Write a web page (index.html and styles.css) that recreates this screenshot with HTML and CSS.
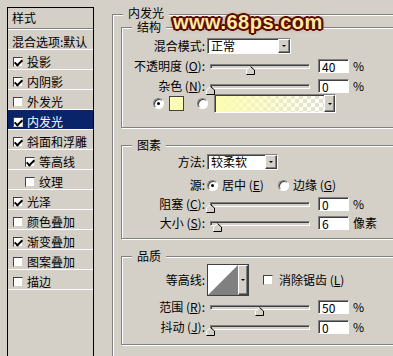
FILE: index.html
```html
<!DOCTYPE html>
<html lang="zh-CN">
<head>
  <meta charset="UTF-8">
  <title>图层样式 - 内发光</title>
  <meta name="viewport" content="width=device-width, initial-scale=1.0">
  <link rel="stylesheet" href="styles.css">
</head>
<body>

<div class="dialog">
  <div class="style-list">
    <div class="list-head">样式</div>
    <div class="list-row first">混合选项:默认</div>
    <div class="list-row"><span class="cb on"></span>投影</div>
    <div class="list-row"><span class="cb on"></span>内阴影</div>
    <div class="list-row"><span class="cb"></span>外发光</div>
    <div class="list-row selected"><span class="cb on"></span>内发光</div>
    <div class="list-row"><span class="cb on"></span>斜面和浮雕</div>
    <div class="list-row sub"><span class="cb on"></span>等高线</div>
    <div class="list-row sub"><span class="cb"></span>纹理</div>
    <div class="list-row"><span class="cb on"></span>光泽</div>
    <div class="list-row"><span class="cb"></span>颜色叠加</div>
    <div class="list-row"><span class="cb on"></span>渐变叠加</div>
    <div class="list-row"><span class="cb"></span>图案叠加</div>
    <div class="list-row"><span class="cb"></span>描边</div>
  </div>

  <div class="group outer">
    <span class="group-title top-title">内发光</span>

    <!-- 结构 -->
    <div class="group sec-structure">
      <span class="group-title">结构</span>
      <div class="row r-mode">
        <span class="lbl">混合模式:</span>
        <div class="select sel-mode"><span class="val">正常</span><span class="drop"></span></div>
      </div>
      <div class="row r-opacity">
        <span class="lbl">不透明度 (<u>O</u>):</span>
        <div class="slider"><div class="track"></div>
          <svg class="thumb" style="left:40px" width="9" height="9" viewBox="0 0 9 9"><path d="M0.5 8.5V4L4.5 0.5L8.5 4V8.5Z" fill="#d4d0c8"/><path d="M0.5 8V4L4.5 0.5" fill="none" stroke="#fff"/><path d="M4.5 0.5L8.5 4V8.5H0.5" fill="none" stroke="#000"/></svg>
        </div>
        <span class="num">40</span><span class="unit">%</span>
      </div>
      <div class="row r-noise">
        <span class="lbl">杂色 (<u>N</u>):</span>
        <div class="slider"><div class="track"></div>
          <svg class="thumb" style="left:0px" width="9" height="9" viewBox="0 0 9 9"><path d="M0.5 8.5V4L4.5 0.5L8.5 4V8.5Z" fill="#d4d0c8"/><path d="M0.5 8V4L4.5 0.5" fill="none" stroke="#fff"/><path d="M4.5 0.5L8.5 4V8.5H0.5" fill="none" stroke="#000"/></svg>
        </div>
        <span class="num">0</span><span class="unit">%</span>
      </div>
      <div class="row r-color">
        <span class="radio on"></span>
        <span class="swatch"></span>
        <span class="radio r-grad"></span>
        <div class="gradient"><span class="drop"></span></div>
      </div>
    </div>

    <!-- 图素 -->
    <div class="group sec-elements">
      <span class="group-title">图素</span>
      <div class="row r-method">
        <span class="lbl">方法:</span>
        <div class="select sel-method"><span class="val">较柔软</span><span class="drop"></span></div>
      </div>
      <div class="row r-source">
        <span class="lbl">源:</span>
        <span class="radio on src"></span><span class="opt w1">居中 (<u>E</u>)</span>
        <span class="radio src"></span><span class="opt">边缘 (<u>G</u>)</span>
      </div>
      <div class="row r-choke">
        <span class="lbl">阻塞 (<u>C</u>):</span>
        <div class="slider"><div class="track"></div>
          <svg class="thumb" style="left:0px" width="9" height="9" viewBox="0 0 9 9"><path d="M0.5 8.5V4L4.5 0.5L8.5 4V8.5Z" fill="#d4d0c8"/><path d="M0.5 8V4L4.5 0.5" fill="none" stroke="#fff"/><path d="M4.5 0.5L8.5 4V8.5H0.5" fill="none" stroke="#000"/></svg>
        </div>
        <span class="num">0</span><span class="unit">%</span>
      </div>
      <div class="row r-size">
        <span class="lbl">大小 (<u>S</u>):</span>
        <div class="slider"><div class="track"></div>
          <svg class="thumb" style="left:7px" width="9" height="9" viewBox="0 0 9 9"><path d="M0.5 8.5V4L4.5 0.5L8.5 4V8.5Z" fill="#d4d0c8"/><path d="M0.5 8V4L4.5 0.5" fill="none" stroke="#fff"/><path d="M4.5 0.5L8.5 4V8.5H0.5" fill="none" stroke="#000"/></svg>
        </div>
        <span class="num">6</span><span class="unit">像素</span>
      </div>
    </div>

    <!-- 品质 -->
    <div class="group sec-quality">
      <span class="group-title">品质</span>
      <div class="row r-contour">
        <span class="lbl">等高线:</span>
        <div class="contour">
          <svg width="30" height="30" viewBox="0 0 30 30"><rect width="30" height="30" fill="#fff"/><path d="M0 30L30 0V30Z" fill="#808080"/></svg>
          <span class="drop"></span>
        </div>
        <span class="cb"></span><span class="opt-aa">消除锯齿 (<u>L</u>)</span>
      </div>
      <div class="row r-range">
        <span class="lbl">范围 (<u>R</u>):</span>
        <div class="slider"><div class="track"></div>
          <svg class="thumb" style="left:49px" width="9" height="9" viewBox="0 0 9 9"><path d="M0.5 8.5V4L4.5 0.5L8.5 4V8.5Z" fill="#d4d0c8"/><path d="M0.5 8V4L4.5 0.5" fill="none" stroke="#fff"/><path d="M4.5 0.5L8.5 4V8.5H0.5" fill="none" stroke="#000"/></svg>
        </div>
        <span class="num">50</span><span class="unit">%</span>
      </div>
      <div class="row r-jitter">
        <span class="lbl">抖动 (<u>J</u>):</span>
        <div class="slider"><div class="track"></div>
          <svg class="thumb" style="left:0px" width="9" height="9" viewBox="0 0 9 9"><path d="M0.5 8.5V4L4.5 0.5L8.5 4V8.5Z" fill="#d4d0c8"/><path d="M0.5 8V4L4.5 0.5" fill="none" stroke="#fff"/><path d="M4.5 0.5L8.5 4V8.5H0.5" fill="none" stroke="#000"/></svg>
        </div>
        <span class="num">0</span><span class="unit">%</span>
      </div>
    </div>
  </div>
</div>

<div class="watermark">www.68ps.com</div>

</body>
</html>
```

FILE: styles.css
```css
* {
  box-sizing: border-box;
}
body {
  margin: 0;
  width: 393px;
  height: 356px;
  overflow: hidden;
  position: relative;
  background: #d4d0c8;
  color: #000;
  font-family: "Noto Sans CJK SC", "Liberation Sans", sans-serif;
  font-size: 12px;
  line-height: 14px;
}
u {
  text-decoration: underline;
}
.dialog {
  display: flex;
  align-items: flex-start;
  padding: 7px 0 0 7px;
}

/* left style list */
.style-list {
  flex: none;
  width: 87px;
  height: 380px;
  border: 1px solid #000;
}
.list-head {
  height: 21px;
  padding: 3px 0 0 4px;
  border-bottom: 1px solid #808080;
}
.list-row {
  display: flex;
  align-items: flex-start;
  height: 20px;
  padding: 5px 0 0 5px;
  border-bottom: 1px solid #fff;
  white-space: nowrap;
}
.list-row.first {
  height: 21px;
  padding-left: 4px;
  border-top: 1px solid #fff;
}
.list-row.sub {
  padding-left: 17px;
}
.list-row.selected {
  background: #0a246a;
  color: #fff;
}
.cb {
  position: relative;
  flex: none;
  width: 10px;
  height: 10px;
  margin: 2px 4px 0 0;
  background: #fff;
  border: 1px solid;
  border-color: #404040 #d4d0c8 #d4d0c8 #404040;
}
.cb.on::after {
  content: "";
  position: absolute;
  left: 2px;
  top: 0;
  width: 3px;
  height: 6px;
  border: solid #000;
  border-width: 0 2px 2px 0;
  transform: rotate(45deg);
}

/* group boxes */
.group {
  position: relative;
  border: 1px solid #808080;
  box-shadow: inset 1px 1px #fff, 1px 1px #fff;
}
.group-title {
  position: absolute;
  top: -7px;
  left: 10px;
  padding: 0 5px;
  line-height: 12px;
  background: #d4d0c8;
  white-space: nowrap;
}
.group-title.top-title {
  top: -8px;
}
.outer {
  flex: none;
  width: 320px;
  height: 400px;
  margin: 7px 0 0 18px;
  padding: 12px 0 0 8px;
}
.sec-structure {
  width: 300px;
  height: 101px;
}
.sec-elements {
  width: 300px;
  height: 94px;
  margin-top: 17px;
}
.sec-quality {
  width: 300px;
  height: 89px;
  margin-top: 17px;
}

/* rows */
.row {
  display: flex;
  align-items: center;
  white-space: nowrap;
}
.lbl {
  flex: none;
  width: 83px;
  text-align: right;
}
.r-mode { margin-top: 10px; height: 16px; }
.r-opacity { margin-top: 5px; height: 14px; }
.r-noise { margin-top: 6px; height: 14px; }
.r-color { margin-top: 1px; height: 19px; padding-left: 31px; }
.r-method { margin-top: 8px; height: 16px; }
.r-source { margin-top: 8px; height: 14px; }
.r-choke { margin-top: 5px; height: 14px; }
.r-size { margin-top: 5px; height: 14px; }
.r-contour { margin-top: 7px; height: 32px; }
.r-range { margin-top: 4px; height: 14px; }
.r-jitter { margin-top: 6px; height: 14px; }

/* controls */
.select {
  flex: none;
  display: flex;
  height: 16px;
  margin-left: 2px;
  background: #fff;
  border: 1px solid;
  border-color: #808080 #fff #fff #808080;
  box-shadow: inset 1px 1px #404040;
}
.sel-mode { width: 84px; }
.sel-method { width: 71px; }
.select .val {
  flex: 1;
  padding: 0 0 0 3px;
  line-height: 14px;
}
.drop {
  position: relative;
  flex: none;
  width: 12px;
  background: #d4d0c8;
  border: 1px solid;
  border-color: #fff #404040 #404040 #fff;
  box-shadow: inset -1px -1px #808080;
}
.drop::after {
  content: "";
  position: absolute;
  left: 50%;
  top: 50%;
  margin: -1px 0 0 -2px;
  border-left: 2px solid transparent;
  border-right: 2px solid transparent;
  border-top: 2px solid #000;
}
.slider {
  position: relative;
  flex: none;
  width: 106px;
  height: 14px;
  margin-left: 1px;
  padding: 5px 0 0 4px;
}
.track {
  width: 100px;
  height: 5px;
  border: 1px solid;
  border-color: #808080 #fff #fff #808080;
  box-shadow: inset 1px 1px #404040;
}
.thumb {
  position: absolute;
  top: 7px;
}
.num {
  flex: none;
  width: 31px;
  height: 14px;
  margin-left: 6px;
  padding: 1px 0 0 3px;
  line-height: 12px;
  background: #fff;
  border: 1px solid;
  border-color: #808080 #fff #fff #808080;
  box-shadow: inset 1px 1px #404040;
}
.unit {
  margin-left: 4px;
}
.radio {
  position: relative;
  flex: none;
  width: 11px;
  height: 11px;
  border-radius: 50%;
  background: #fff;
  border: 1px solid;
  border-color: #808080 #fff #fff #808080;
  box-shadow: inset 1px 1px #404040;
}
.radio.on::after {
  content: "";
  position: absolute;
  left: 3px;
  top: 3px;
  width: 3px;
  height: 3px;
  border-radius: 50%;
  background: #000;
}
.radio.src {
  margin-left: 2px;
}
.opt {
  margin-left: 4px;
}
.opt.w1 {
  width: 54px;
}
.swatch {
  flex: none;
  width: 15px;
  height: 15px;
  margin-left: 5px;
  background: #fdfdb4;
  border: 1px solid #404040;
}
.r-grad {
  margin-left: 13px;
}
.gradient {
  flex: none;
  display: flex;
  justify-content: flex-end;
  width: 122px;
  height: 19px;
  margin-left: 6px;
  border: 1px solid;
  border-color: #808080 #fff #fff #808080;
  box-shadow: inset 1px 1px #404040;
  background:
    linear-gradient(to right, #fdfdb0, rgba(253, 253, 176, 0)),
    repeating-conic-gradient(#dcdcdc 0 25%, #fff 0 50%) 0 0 / 8px 8px;
}
.gradient .drop {
  width: 11px;
}
.contour {
  flex: none;
  display: flex;
  width: 42px;
  height: 32px;
  margin-left: 2px;
  border: 1px solid #404040;
  background: #fff;
}
.contour svg {
  display: block;
}
.contour .drop {
  width: 10px;
}
.row .cb {
  margin: 0 0 0 14px;
}
.opt-aa {
  margin-left: 6px;
}

/* site watermark over the screenshot */
.watermark {
  position: absolute;
  left: 173px;
  top: 11px;
  font-family: "Liberation Sans", Arial, sans-serif;
  font-weight: bold;
  font-size: 20px;
  line-height: 22px;
  letter-spacing: 0.5px;
  color: #ffe9a6;
  text-shadow:
    -2px 0 #5a0c00, 2px 0 #5a0c00, 0 -2px #5a0c00, 0 2px #5a0c00,
    -1px -1px #5a0c00, 1px 1px #5a0c00, -1px 1px #5a0c00, 1px -1px #5a0c00,
    -2px -1px #5a0c00, 2px 1px #5a0c00, -2px 1px #5a0c00, 2px -1px #5a0c00,
    0 0 5px #c0604a;
}
```
